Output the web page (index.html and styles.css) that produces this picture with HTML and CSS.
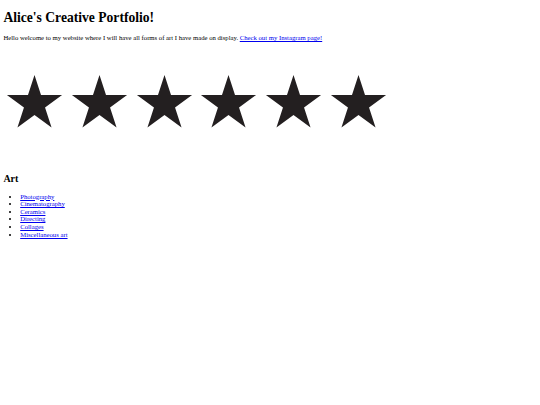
FILE: index.html
```html
<!DOCTYPE html>
<html>
<head>
<meta charset="utf-8">
<link rel="stylesheet" href="styles.css">
</head>
<body>
<h1 class="title">Alice's Creative Portfolio!</h1>
<p class="intro">Hello welcome to my website where I will have all forms of art I have made on display. <a href="#">Check out my Instagram page!</a></p>
<div class="stars">
<svg class="star" viewBox="0 0 63 57" width="63" height="57"><polygon points="31.5,2 38.01,22.04 59.08,22.04 42.04,34.42 48.55,54.46 31.5,42.08 14.45,54.46 20.96,34.42 3.92,22.04 24.99,22.04"/></svg>
<svg class="star" viewBox="0 0 63 57" width="63" height="57"><polygon points="31.5,2 38.01,22.04 59.08,22.04 42.04,34.42 48.55,54.46 31.5,42.08 14.45,54.46 20.96,34.42 3.92,22.04 24.99,22.04"/></svg>
<svg class="star" viewBox="0 0 63 57" width="63" height="57"><polygon points="31.5,2 38.01,22.04 59.08,22.04 42.04,34.42 48.55,54.46 31.5,42.08 14.45,54.46 20.96,34.42 3.92,22.04 24.99,22.04"/></svg>
<svg class="star" viewBox="0 0 63 57" width="63" height="57"><polygon points="31.5,2 38.01,22.04 59.08,22.04 42.04,34.42 48.55,54.46 31.5,42.08 14.45,54.46 20.96,34.42 3.92,22.04 24.99,22.04"/></svg>
<svg class="star" viewBox="0 0 63 57" width="63" height="57"><polygon points="31.5,2 38.01,22.04 59.08,22.04 42.04,34.42 48.55,54.46 31.5,42.08 14.45,54.46 20.96,34.42 3.92,22.04 24.99,22.04"/></svg>
<svg class="star" viewBox="0 0 63 57" width="63" height="57"><polygon points="31.5,2 38.01,22.04 59.08,22.04 42.04,34.42 48.55,54.46 31.5,42.08 14.45,54.46 20.96,34.42 3.92,22.04 24.99,22.04"/></svg>
</div>
<h2 class="section">Art</h2>
<ul class="art-list">
<li><a href="#">Photography</a></li>
<li><a href="#">Cinematography</a></li>
<li><a href="#">Ceramics</a></li>
<li><a href="#">Directing</a></li>
<li><a href="#">Collages</a></li>
<li><a href="#">Miscellaneous art</a></li>
</ul>
</body>
</html>
```
FILE: styles.css
```css
html { background: #fff; }
body {
  margin: 3.4px;
  font-family: "Liberation Serif", "Times New Roman", serif;
  font-size: 6.7px;
  color: #000;
}
a { color: #0000ee; text-decoration: underline; }
.title {
  font-size: 13.6px;
  font-weight: bold;
  margin: 7px 0 8px;
}
.intro { margin: 0; }
.stars {
  display: flex;
  gap: 1.7px;
  margin-top: 32px;
}
.star { display: block; fill: #231f20; }
.section {
  font-size: 10px;
  font-weight: bold;
  margin: 43px 0 8.3px;
}
.art-list {
  margin: 6.7px 0;
  padding-left: 16.8px;
  line-height: 7.6px;
}
```
